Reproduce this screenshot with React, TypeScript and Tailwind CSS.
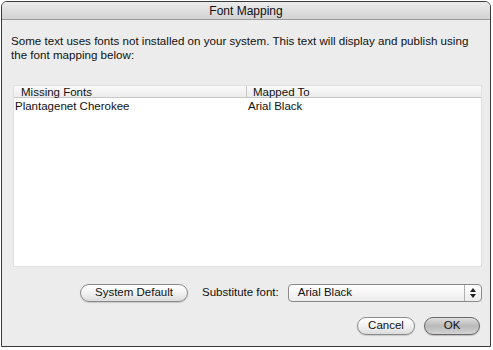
import React from "react";

const font = { fontFamily: '"Liberation Sans", Arial, sans-serif' };

export default function App() {
  return (
    <div className="w-[493px] h-[350px] bg-white relative" style={font}>
      <div className="ml-[1px] mt-[1px] w-[490px] h-[346px] border border-[#3a3a3a] rounded-t-[6px] bg-[#ececec] flex flex-col overflow-hidden text-[#111]">
        <div className="h-[18px] shrink-0 border-b border-[#9a9a9a] bg-gradient-to-b from-[#ececec] to-[#d2d2d2] flex items-center justify-center text-[12px] leading-none">
          Font Mapping
        </div>
        <div className="pt-[14px] pl-[9px] pr-[4px] text-[11.6px] leading-[14px]">
          Some text uses fonts not installed on your system. This text will display and publish using the font mapping below:
        </div>
        <div className="mt-[23px] ml-[11px] w-[469px] h-[182px] bg-white border border-[#e0e0e0] flex flex-col">
          <div className="h-[12px] flex border-b border-[#c8c8c8] bg-gradient-to-b from-[#fafafa] to-[#ececec] text-[11.5px] leading-[12px]">
            <div className="w-[233px] pl-[7px] border-r border-[#c8c8c8]">Missing Fonts</div>
            <div className="flex-1 pl-[6px]">Mapped To</div>
          </div>
          <div className="flex text-[11.5px] leading-[14px] pt-[1px]">
            <div className="w-[234px] pl-[1px]">Plantagenet Cherokee</div>
            <div className="flex-1">Arial Black</div>
          </div>
        </div>
        <div className="mt-[16px] flex items-center h-[19px] text-[11.5px]">
          <button className="ml-[78px] w-[108px] h-[18px] rounded-full border border-[#8a8a8a] bg-gradient-to-b from-[#ffffff] via-[#f2f2f2] to-[#dcdcdc] shadow-[0_1px_1px_rgba(0,0,0,0.15)] leading-none">
            System Default
          </button>
          <span className="ml-[14px]">Substitute font:</span>
          <div className="ml-[9px] w-[194px] h-[18px] rounded-[4px] border border-[#8a8a8a] bg-gradient-to-b from-[#ffffff] to-[#ececec] flex items-center">
            <span className="pl-[9px] flex-1">Arial Black</span>
            <div className="w-[17px] h-full border-l border-[#b0b0b0] flex flex-col items-center justify-center gap-[2px]">
              <svg width="6" height="4" viewBox="0 0 6 4"><path d="M0 4 L3 0 L6 4 Z" fill="#222" /></svg>
              <svg width="6" height="4" viewBox="0 0 6 4"><path d="M0 0 L3 4 L6 0 Z" fill="#222" /></svg>
            </div>
          </div>
        </div>
        <div className="mt-[14px] flex items-center justify-end h-[19px] pr-[10px] text-[11.5px]">
          <button className="w-[58px] h-[18px] rounded-full border border-[#8a8a8a] bg-gradient-to-b from-[#ffffff] via-[#f2f2f2] to-[#dcdcdc] shadow-[0_1px_1px_rgba(0,0,0,0.15)] leading-none">
            Cancel
          </button>
          <button className="ml-[9px] w-[56px] h-[18px] rounded-full border border-[#6a6a6a] bg-gradient-to-b from-[#e0e0e0] via-[#b8b8b8] to-[#d4d4d4] shadow-[0_1px_1px_rgba(0,0,0,0.2)] leading-none">
            OK
          </button>
        </div>
      </div>
    </div>
  );
}
